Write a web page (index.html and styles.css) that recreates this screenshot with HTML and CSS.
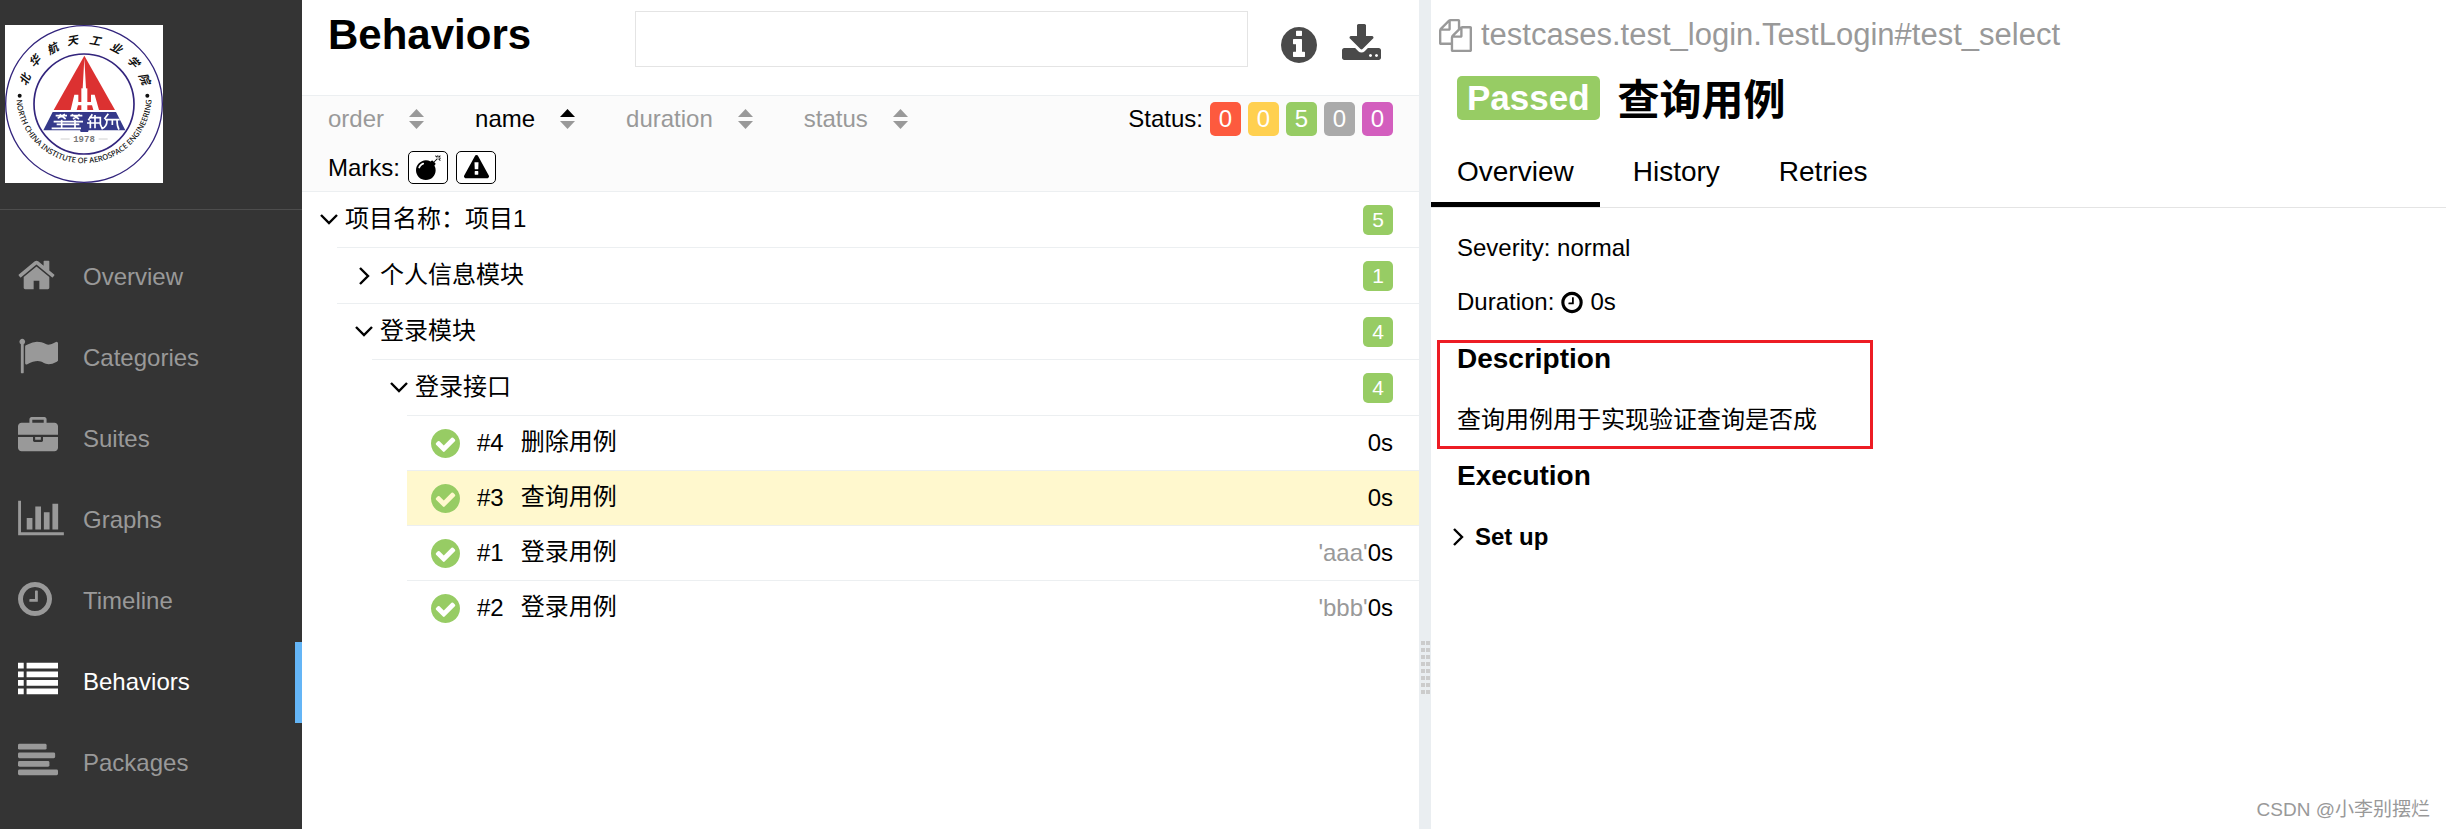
FILE: index.html
```html
<!DOCTYPE html>
<html lang="zh-CN">
<head>
<meta charset="utf-8">
<meta name="viewport" content="width=device-width, initial-scale=1">
<title>Behaviors</title>
<link rel="stylesheet" href="styles.css">
</head>
<body>
<svg class="sprite" aria-hidden="true">
  <symbol id="i-check" viewBox="128 128 1536 1536"><path d="M1412 734q0-28-18-46l-91-90q-19-19-45-19t-45 19l-408 407-226-226q-19-19-45-19t-45 19l-91 90q-18 18-18 46 0 27 18 45l362 362q19 19 45 19 27 0 46-19l543-543q18-18 18-45zm252 162q0 209-103 385.5t-279.5 279.5-385.5 103-385.5-103-279.5-279.5-103-385.5 103-385.5 279.5-279.5 385.5-103 385.5 103 279.5 279.5 103 385.5z"/></symbol>
  <symbol id="i-clock" viewBox="128 0 1536 1792"><path d="M1024 544v448q0 14-9 23t-23 9h-320q-14 0-23-9t-9-23v-64q0-14 9-23t23-9h224v-352q0-14 9-23t23-9h64q14 0 23 9t9 23zm416 352q0-148-73-273t-198-198-273-73-273 73-198 198-73 273 73 273 198 198 273 73 273-73 198-198 73-273zm224 0q0 209-103 385.5t-279.5 279.5-385.5 103-385.5-103-279.5-279.5-103-385.5 103-385.5 279.5-279.5 385.5-103 385.5 103 279.5 279.5 103 385.5z"/></symbol>
  <symbol id="i-down" viewBox="0 0 20 20"><path d="M2 5l8 8 8-8" fill="none" stroke="currentColor" stroke-width="2.4"/></symbol>
  <symbol id="i-right" viewBox="0 0 20 20"><path d="M6 2l8 8-8 8" fill="none" stroke="currentColor" stroke-width="2.4"/></symbol>
</svg>
<div class="app">
  <aside class="side">
    <div class="brand">
      <svg class="logo" viewBox="0 0 474 474" role="img" aria-label="北华航天工业学院">
        <rect width="474" height="474" fill="#fff"/>
        <circle cx="237" cy="237" r="235" fill="none" stroke="#33257d" stroke-width="4"/>
        <circle cx="237" cy="237" r="150" fill="none" stroke="#33257d" stroke-width="5"/>
        <path d="M238 92L146 255h184z" fill="#dc3131"/>
        <path d="M238 100l-6 108v47h12v-47zM208 209h12v22h38v-22h11l13 46h-17l-4-14h-42l-4 14h-18z" fill="#fff"/>
        <path d="M229 190h18v65h-18z" fill="#fff"/>
        <path d="M143 261h190l28 55H251l-2 5h-22l-2-5H115z" fill="#35398a"/>
        <g fill="none" stroke="#fff" stroke-width="5">
          <path d="M152 272h34M196 272h36M158 280l22-12M164 268l18 14M200 268l22 14M224 268l-20 14M146 290h88M155 298h68M140 310h88M170 284v26M210 284v26"/>
          <path d="M262 268l-12 18M252 278h34v20l6 14M256 286v24M270 270v40M246 294h40M310 266l-12 16M300 284h44M306 286q0 20-16 26M322 286v14M336 286q0 18 6 28"/>
        </g>
        <path d="M167 342h27M281 342h27" stroke="#b9b9b9" stroke-width="2"/>
        <text x="237" y="351" class="logo-year">1978</text>
        <circle cx="44" cy="212" r="6" fill="#111"/>
        <circle cx="427" cy="212" r="6" fill="#111"/>
        <path id="arc" d="M35 232A203 203 0 0 0 439 232" fill="none"/>
        <text class="logo-en"><textPath href="#arc" startOffset="50%">NORTH CHINA INSTITUTE OF AEROSPACE ENGINEERING</textPath></text>
        <g class="logo-cn">
          <text transform="translate(61 164) rotate(-67)" y="11">北</text>
          <text transform="translate(90 109) rotate(-48)" y="11">华</text>
          <text transform="translate(143 72) rotate(-29)" y="11">航</text>
          <text transform="translate(202 48) rotate(-10)" y="11">天</text>
          <text transform="translate(270 48) rotate(10)" y="11">工</text>
          <text transform="translate(333 70) rotate(29)" y="11">业</text>
          <text transform="translate(384 111) rotate(48)" y="11">学</text>
          <text transform="translate(417 162) rotate(67)" y="11">院</text>
        </g>
      </svg>
    </div>
    <nav class="menu">
      <a href="#overview"><span class="menu-icon"><svg width="37" height="40" viewBox="64 0 1664 1792"><path d="M1472 992v480q0 26-19 45t-45 19h-384v-384h-256v384h-384q-26 0-45-19t-19-45v-480q0-1 .5-3t.5-3l575-474 575 474q1 2 1 6zm223-69l-62 74q-8 9-21 11h-3q-13 0-21-7l-692-577-692 577q-12 8-24 7-13-2-21-11l-62-74q-8-10-7-23.5t11-21.5l719-599q32-26 76-26t76 26l244 204v-195q0-14 9-23t23-9h192q14 0 23 9t9 23v408l219 182q10 8 11 21.5t-7 23.5z"/></svg></span>Overview</a>
      <a href="#categories"><span class="menu-icon"><svg width="40" height="40" viewBox="0 0 1792 1792"><path d="M320 256q0 72-64 110v1266q0 13-9.500 22.500t-22.500 9.500h-64q-13 0-22.500-9.500t-9.500-22.500v-1266q-64-38-64-110 0-53 37.500-90.500t90.500-37.500 90.500 37.500 37.500 90.500zm1472 64v763q0 25-12.500 38.500t-39.500 27.500q-215 116-369 116-61 0-123.500-22t-108.500-48-115.500-48-142.500-22q-192 0-464 146-17 9-33 9-26 0-45-19t-19-45v-742q0-32 31-55 21-14 79-43 236-120 421-120 107 0 200 29t219 88q38 19 88 19 54 0 117.500-21t110-47 88-47 54.500-21q26 0 45 19t19 45z"/></svg></span>Categories</a>
      <a href="#suites"><span class="menu-icon"><svg width="40" height="40" viewBox="0 0 1792 1792"><path d="M640 256h512v-128h-512v128zm1152 640v480q0 66-47 113t-113 47h-1472q-66 0-113-47t-47-113v-480h672v160q0 26 19 45t45 19h320q26 0 45-19t19-45v-160h672zm-768 0v128h-256v-128h256zm768-480v384h-1792v-384q0-66 47-113t113-47h352v-160q0-40 28-68t68-28h576q40 0 68 28t28 68v160h352q66 0 113 47t47 113z"/></svg></span>Suites</a>
      <a href="#graph"><span class="menu-icon"><svg width="46" height="40" viewBox="0 0 2048 1792"><path d="M640 896v512h-256v-512h256zm384-512v1024h-256v-1024h256zm1024 1152v128h-2048v-1536h128v1408h1920zm-640-896v768h-256v-768h256zm384-384v1152h-256v-1152h256z"/></svg></span>Graphs</a>
      <a href="#timeline"><span class="menu-icon"><svg width="34" height="40"><use href="#i-clock"/></svg></span>Timeline</a>
      <a href="#behaviors" class="active" aria-current="page"><span class="menu-icon"><svg width="40" height="40" viewBox="0 0 1792 1792"><path d="M0 128h256v256H0zM0 512h256v256H0zM0 896h256v256H0zM0 1280h256v256H0zM384 128h1408v256H384zM384 512h1408v256H384zM384 896h1408v256H384zM384 1280h1408v256H384z"/></svg></span>Behaviors</a>
      <a href="#packages"><span class="menu-icon"><svg width="40" height="40" viewBox="0 0 1792 1792"><rect y="128" width="1280" height="256" rx="64"/><rect y="512" width="1664" height="256" rx="64"/><rect y="896" width="1408" height="256" rx="64"/><rect y="1280" width="1792" height="256" rx="64"/></svg></span>Packages</a>
    </nav>
  </aside>

  <main class="tree-pane">
    <header class="pane-head">
      <h1>Behaviors</h1>
      <input class="search" type="text" aria-label="Search">
      <div class="actions">
        <button type="button" aria-label="Information"><svg width="36" height="42" viewBox="128 0 1536 1792"><path d="M1152 1376v-160q0-14-9-23t-23-9h-96v-512q0-14-9-23t-23-9h-320q-14 0-23 9t-9 23v160q0 14 9 23t23 9h96v320h-96q-14 0-23 9t-9 23v160q0 14 9 23t23 9h448q14 0 23-9t9-23zm-128-896v-160q0-14-9-23t-23-9h-192q-14 0-23 9t-9 23v160q0 14 9 23t23 9h192q14 0 23-9t9-23zm640 416q0 209-103 385.500t-279.500 279.500-385.500 103-385.500-103-279.500-279.500-103-385.500 103-385.500 279.500-279.500 385.500-103 385.500 103 279.500 279.500 103 385.500z"/></svg></button>
        <button type="button" aria-label="Download"><svg width="39" height="42" viewBox="64 0 1664 1792"><path d="M1344 1344q0-26-19-45t-45-19-45 19-19 45 19 45 45 19 45-19 19-45zm256 0q0-26-19-45t-45-19-45 19-19 45 19 45 45 19 45-19 19-45zm128-224v320q0 40-28 68t-68 28h-1472q-40 0-68-28t-28-68v-320q0-40 28-68t68-28h465l135 136q58 56 136 56t136-56l136-136h464q40 0 68 28t28 68zm-325-569q17 41-14 70l-448 448q-18 19-45 19t-45-19l-448-448q-31-29-14-70 17-39 59-39h256v-448q0-26 19-45t45-19h256q26 0 45 19t19 45v448h256q42 0 59 39z"/></svg></button>
      </div>
    </header>

    <section class="filters">
      <div class="filter-row">
        <div class="sorters">
          <button type="button">order<svg class="sort" viewBox="0 0 15 20"><path d="M7.500 0L15 8H0zM0 12h15l-7.500 8z"/></svg></button>
          <button type="button" class="on">name<svg class="sort" viewBox="0 0 15 20"><path d="M7.500 0L15 8H0z"/><path class="dim" d="M0 12h15l-7.500 8z"/></svg></button>
          <button type="button">duration<svg class="sort" viewBox="0 0 15 20"><path d="M7.500 0L15 8H0zM0 12h15l-7.500 8z"/></svg></button>
          <button type="button">status<svg class="sort" viewBox="0 0 15 20"><path d="M7.500 0L15 8H0zM0 12h15l-7.500 8z"/></svg></button>
        </div>
        <div class="statuses">
          <span>Status:</span>
          <button type="button" class="pill failed">0</button>
          <button type="button" class="pill broken">0</button>
          <button type="button" class="pill passed">5</button>
          <button type="button" class="pill skipped">0</button>
          <button type="button" class="pill unknown">0</button>
        </div>
      </div>
      <div class="marks">
        <span>Marks:</span>
        <button type="button" aria-label="Newly failed"><svg width="25" height="25" viewBox="0 0 1792 1792"><path d="M571 589q-10-25-34-35t-49 0q-108 44-191 127t-127 191q-10 25 0 49t35 34q13 5 24 5 42 0 60-40 34-84 98.500-148.500t148.500-98.500q25-11 35-35t0-49zm942-356l46 46-244 243 68 68q19 19 19 45.500t-19 45.500l-64 64q89 161 89 343 0 143-55.500 273.500t-150 225-225 150-273.500 55.500-273.500-55.500-225-150-150-225-55.500-273.500 55.500-273.500 150-225 225-150 273.500-55.500q182 0 343 89l64-64q19-19 45.500-19t45.500 19l68 68zm8-56q-10 10-22 10-13 0-23-10l-91-90q-9-10-9-23t9-23q10-9 23-9t23 9l90 91q10 9 10 22.500t-10 22.500zm230 230q-11 9-23 9t-23-9l-90-91q-10-9-10-22.500t10-22.500q9-10 22.500-10t22.500 10l91 90q9 10 9 23t-9 23zm41-183q0 14-9 23t-23 9h-96q-14 0-23-9t-9-23 9-23 23-9h96q14 0 23 9t9 23zm-192-192v96q0 14-9 23t-23 9-23-9-9-23v-96q0-14 9-23t23-9 23 9 9 23zm151 55l-91 90q-10 10-22 10-13 0-23-10-10-9-10-22.500t10-22.500l90-91q10-9 23-9t23 9q9 10 9 23t-9 23z"/></svg></button>
        <button type="button" aria-label="Flaky"><svg width="25" height="25" viewBox="0 0 1792 1792"><path d="M1024 1375v-190q0-14-9.500-23.500t-22.500-9.500h-192q-13 0-22.500 9.500t-9.500 23.500v190q0 14 9.500 23.500t22.500 9.500h192q13 0 22.500-9.500t9.500-23.500zm-2-374l18-459q0-12-10-19-13-11-24-11h-220q-11 0-24 11-10 7-10 21l17 457q0 10 10 16.500t24 6.500h185q14 0 23.500-6.500t10.500-16.500zm-14-934l768 1408q35 63-2 126-17 29-46.500 46t-63.500 17h-1536q-34 0-63.500-17t-46.500-46q-37-63-2-126l768-1408q17-31 47-49t65-18 65 18 47 49z"/></svg></button>
      </div>
    </section>

    <ul class="tree">
      <li>
        <a class="group" href="#project"><svg class="chev"><use href="#i-down"/></svg><span class="name">项目名称：项目1</span><span class="count">5</span></a>
        <ul>
          <li><a class="group" href="#profile"><svg class="chev"><use href="#i-right"/></svg><span class="name">个人信息模块</span><span class="count">1</span></a></li>
          <li>
            <a class="group" href="#login"><svg class="chev"><use href="#i-down"/></svg><span class="name">登录模块</span><span class="count">4</span></a>
            <ul>
              <li>
                <a class="group" href="#login-api"><svg class="chev"><use href="#i-down"/></svg><span class="name">登录接口</span><span class="count">4</span></a>
                <ul>
                  <li><a class="leaf" href="#t4"><svg class="ok"><use href="#i-check"/></svg><span class="num">#4</span><span class="name">删除用例</span><span>0s</span></a></li>
                  <li><a class="leaf current" href="#t3"><svg class="ok"><use href="#i-check"/></svg><span class="num">#3</span><span class="name">查询用例</span><span>0s</span></a></li>
                  <li><a class="leaf" href="#t1"><svg class="ok"><use href="#i-check"/></svg><span class="num">#1</span><span class="name">登录用例</span><span class="param">'aaa'</span><span>0s</span></a></li>
                  <li><a class="leaf" href="#t2"><svg class="ok"><use href="#i-check"/></svg><span class="num">#2</span><span class="name">登录用例</span><span class="param">'bbb'</span><span>0s</span></a></li>
                </ul>
              </li>
            </ul>
          </li>
        </ul>
      </li>
    </ul>
  </main>

  <div class="gutter" role="separator" aria-orientation="vertical"><span class="grip"></span></div>

  <section class="detail">
    <div class="fullname">
      <svg width="33" height="33" viewBox="0 0 1792 1792"><path d="M1696 384q40 0 68 28t28 68v1216q0 40-28 68t-68 28h-960q-40 0-68-28t-28-68v-288h-544q-40 0-68-28t-28-68v-672q0-40 20-88t48-76l408-408q28-28 76-48t88-20h416q40 0 68 28t28 68v328q68-40 128-40h416zm-544 213l-299 299h299v-299zm-640-384l-299 299h299v-299zm196 647l316-316v-416h-384v416q0 40-28 68t-68 28h-416v640h512v-256q0-40 20-88t48-76zm956 804v-1152h-384v416q0 40-28 68t-68 28h-416v640h896z"/></svg>
      <span>testcases.test_login.TestLogin#test_select</span>
    </div>
    <h2 class="case-title"><span class="verdict">Passed</span><span class="case-name">查询用例</span></h2>
    <nav class="tabs">
      <a href="#tab-overview" class="active">Overview</a>
      <a href="#tab-history">History</a>
      <a href="#tab-retries">Retries</a>
    </nav>
    <div class="body">
      <p>Severity: normal</p>
      <p class="duration">Duration: <svg width="22" height="25"><use href="#i-clock"/></svg> 0s</p>
      <section class="marked">
        <h3>Description</h3>
        <p>查询用例用于实现验证查询是否成</p>
      </section>
      <h3>Execution</h3>
      <button type="button" class="setup"><svg class="chev"><use href="#i-right"/></svg>Set up</button>
    </div>
    <div class="watermark">CSDN @小李别摆烂</div>
  </section>
</div>
</body>
</html>
```
FILE: styles.css
```css
* {
  box-sizing: border-box;
}

body {
  margin: 0;
  font: 24px/30px "Liberation Sans", "Noto Sans CJK SC", sans-serif;
  color: #000;
  background: #fff;
}

h1, h2, h3, p, ul {
  margin: 0;
  padding: 0;
}

ul {
  list-style: none;
}

a {
  color: inherit;
  text-decoration: none;
}

button {
  padding: 0;
  border: 0;
  background: none;
  color: inherit;
  font: inherit;
  cursor: pointer;
}

svg {
  display: block;
  flex: none;
  fill: currentColor;
}

.sprite {
  position: absolute;
  width: 0;
  height: 0;
}

.app {
  display: grid;
  grid-template-columns: 302px 1117fr 12px 1015fr;
  min-height: 100vh;
}

/* Sidebar */

.side {
  background: #343434;
  color: #999;
}

.brand {
  padding: 25px 5px 26px;
  border-bottom: 1px solid #4d4d4d;
}

.logo {
  width: 158px;
  height: 158px;
}

.logo-year {
  font: bold 27px "Liberation Mono", monospace;
  fill: #777;
  text-anchor: middle;
}

.logo-en {
  font: 500 23px "Noto Sans", sans-serif;
  fill: #111;
  text-anchor: middle;
}

.logo-cn {
  font: italic bold 34px "Noto Sans CJK SC", sans-serif;
  fill: #111;
  text-anchor: middle;
}

.menu {
  padding-top: 27px;
}

.menu a {
  display: flex;
  align-items: center;
  height: 81px;
  padding: 0 0 1px 18px;
}

.menu .active {
  border-right: 7px solid #64b5f6;
  color: #fff;
}

.menu-icon {
  width: 65px;
  padding-bottom: 4px;
}

/* Tree pane */

.pane-head {
  display: grid;
  grid-template-columns: 307px 1fr auto;
  align-items: start;
  height: 95px;
  padding: 11px 38px 0 26px;
}

.pane-head h1 {
  font-size: 42px;
  line-height: 48px;
}

.search {
  width: 100%;
  height: 56px;
  padding: 0 16px;
  border: 1px solid #e4e4e4;
  font: inherit;
}

.actions {
  display: flex;
  gap: 25px;
  padding: 13px 0 0 33px;
  color: #4a4a4a;
}

.filters {
  display: grid;
  gap: 15px;
  padding: 6px 26px 7px;
  border: solid #eceff1;
  border-width: 1px 0;
  background: #fbfbfb;
}

.filter-row,
.sorters,
.statuses,
.marks {
  display: flex;
  align-items: center;
}

.filter-row {
  justify-content: space-between;
}

.sorters {
  gap: 51px;
  color: #999;
}

.sorters button {
  display: flex;
  align-items: center;
  gap: 25px;
}

.sorters .on {
  color: #000;
}

.sort {
  width: 15px;
  height: 20px;
}

.sort .dim {
  fill: #999;
}

.statuses {
  gap: 7px;
}

.pill {
  width: 31px;
  height: 34px;
  border-radius: 5px;
  color: #fff;
}

.failed { background: #fd5a3e; }
.broken { background: #ffd050; }
.passed { background: #97cc64; }
.skipped { background: #aaa; }
.unknown { background: #d35ebe; }

.marks {
  gap: 8px;
}

.marks button {
  display: grid;
  place-items: center;
  width: 40px;
  height: 33px;
  border: 1px solid #000;
  border-radius: 5px;
  background: #fff;
}

.tree ul {
  margin-left: 35px;
}

.tree ul li {
  border-top: 1px solid #eceff1;
}

.group,
.leaf {
  display: flex;
  align-items: center;
  height: 55px;
  padding-right: 26px;
}

.group {
  padding-left: 17px;
}

.name {
  flex: 1;
  padding-bottom: 2px;
}

.chev {
  width: 20px;
  height: 20px;
  margin-right: 6px;
}

.count {
  width: 30px;
  border-radius: 5px;
  background: #97cc64;
  color: #fff;
  font-size: 21px;
  text-align: center;
}

.leaf {
  height: 54px;
  padding-left: 24px;
}

.current {
  background: #fff8ce;
}

.ok {
  width: 29px;
  height: 29px;
  fill: #97cc64;
}

.num {
  padding: 0 17px;
}

.param {
  color: #999;
}

/* Splitter */

.gutter {
  padding: 641px 2px 0;
  background: #eaeef1;
  cursor: col-resize;
}

.grip {
  display: block;
  width: 9px;
  height: 53px;
  background: repeating-linear-gradient(transparent 0 4px, #eaeef1 4px 7px),
    linear-gradient(90deg, #ccc 0 4px, #eaeef1 4px 5px, #ccc 5px);
}

/* Details pane */

.detail {
  position: relative;
  padding-top: 16px;
}

.fullname {
  display: flex;
  align-items: center;
  gap: 9px;
  height: 38px;
  padding-left: 8px;
  color: #999;
  font-size: 31px;
}

.case-title {
  display: flex;
  align-items: center;
  gap: 18px;
  height: 48px;
  margin: 20px 26px 32px;
  font-size: 42px;
}

.case-name {
  padding-top: 5px;
}

.verdict {
  padding: 0 10px;
  border-radius: 5px;
  background: #97cc64;
  color: #fff;
  font-size: 35px;
  line-height: 44px;
}

.tabs {
  display: flex;
  gap: 7px;
  border-bottom: 1px solid #e4e4e4;
  font-size: 28px;
  line-height: 36px;
}

.tabs a {
  padding: 0 26px 12px;
  border-bottom: 5px solid transparent;
}

.tabs .active {
  border-color: #000;
}

.body {
  padding: 25px 26px;
}

.duration {
  display: flex;
  align-items: center;
  gap: 7px;
  margin-top: 24px;
}

.body h3 {
  margin-bottom: 30px;
  font-size: 28px;
  line-height: 32px;
}

.marked {
  max-width: 436px;
  margin: 23px 0 11px -20px;
  padding: 0 17px 11px;
  border: 3px solid #ed1c24;
}

.setup {
  display: flex;
  align-items: center;
  margin-left: -9px;
  font-weight: bold;
}

.setup .chev {
  margin-right: 7px;
}

.watermark {
  position: absolute;
  right: 16px;
  bottom: 4px;
  color: #999;
  font-size: 19px;
}
```
